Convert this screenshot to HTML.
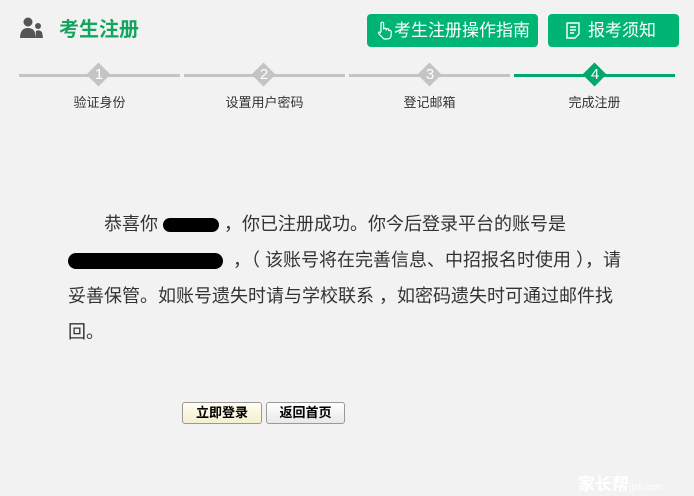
<!DOCTYPE html>
<html><head><meta charset="utf-8"><style>
body{margin:0;width:694px;height:496px;background:#f2f2f2;font-family:"Liberation Sans","Noto Sans CJK SC",sans-serif;position:relative;overflow:hidden}
.a{position:absolute}
.title{left:59px;top:16px;font-size:20px;font-weight:bold;color:#12a55f;line-height:28px}
.btn{background:#00b574;color:#fff;border-radius:4px;top:14px;height:33px;font-size:17px;line-height:33px}
.line{top:74px;height:3px;background:#c4c4c4}
.dia{width:17px;height:17px;transform:rotate(45deg);background:#c4c4c4;top:66px}
.num{top:64px;width:20px;text-align:center;color:#fff;font-size:15px;line-height:22px}
.lab{top:94px;font-size:13px;color:#333;width:161px;text-align:center;line-height:18px}
.txt{left:68px;top:206px;width:600px;font-size:18px;line-height:36px;color:#333;white-space:nowrap}
.blob{display:inline-block;background:#000;border-radius:8px;vertical-align:middle}
.b{top:402px;height:20px;border:1px solid #999;border-radius:3px;font-size:13px;font-weight:bold;line-height:20px;text-align:center;color:#000;background:linear-gradient(#fff,#e8e8e8)}
</style></head><body>
<svg class="a" style="left:19px;top:17px" width="26" height="22" viewBox="0 0 26 22">
<circle cx="9" cy="5" r="4.5" fill="#555"/><path d="M1 21 Q1 11 9 11 Q15 11 16 16 L16 21Z" fill="#555"/>
<circle cx="19" cy="9" r="3" fill="#555"/><path d="M16 21 L17 14 Q20 12 23 15 L24 21Z" fill="#555"/></svg>
<div class="a title">考生注册</div>
<div class="a btn" style="left:367px;width:171px"><svg style="position:absolute;left:9px;top:7px" width="16" height="19" viewBox="0 0 16 19"><path d="M5 11V2.5a1.3 1.3 0 0 1 2.6 0V8 M7.6 8.5a1.3 1.3 0 0 1 2.6 0V9.5 M10.2 9a1.3 1.3 0 0 1 2.6 0V10 M12.8 10a1.3 1.3 0 0 1 2.4 0.5V14Q15 18 11 18H8L3 13Q2 11.5 3.5 11L5 12" stroke="#fff" fill="none" stroke-width="1.2"/></svg><span style="margin-left:27px">考生注册操作指南</span></div>
<div class="a btn" style="left:548px;width:131px"><svg style="position:absolute;left:18px;top:8px" width="14" height="17" viewBox="0 0 14 17"><path d="M1 1H13V12L9 16H1Z M4 5H10 M4 8H10 M4 11H8" stroke="#fff" fill="none" stroke-width="1.4"/></svg><span style="margin-left:40px">报考须知</span></div>
<div class="a line" style="left:19px;width:161px"></div>
<div class="a line" style="left:184px;width:161px"></div>
<div class="a line" style="left:349px;width:161px"></div>
<div class="a line" style="left:514px;width:161px;background:#00a86b"></div>
<div class="a dia" style="left:90px"></div><div class="a dia" style="left:255px"></div><div class="a dia" style="left:421px"></div><div class="a dia" style="left:586px;background:#00a86b"></div>
<div class="a num" style="left:89px">1</div><div class="a num" style="left:254px">2</div><div class="a num" style="left:420px">3</div><div class="a num" style="left:585px">4</div>
<div class="a lab" style="left:19px">验证身份</div><div class="a lab" style="left:184px">设置用户密码</div><div class="a lab" style="left:349px">登记邮箱</div><div class="a lab" style="left:514px">完成注册</div>
<div class="a txt">　　恭喜你 <span class="blob" style="width:56px;height:14px"></span> ，你已注册成功。你今后登录平台的账号是<br><span class="blob" style="width:155px;height:16px"></span> &nbsp;，（ 该账号将在完善信息、中招报名时使用 ），请<br>妥善保管。如账号遗失时请与学校联系 ，如密码遗失时可通过邮件找<br>回。</div>
<div class="a b" style="left:182px;width:78px;background:linear-gradient(#fffef0,#f4efd0)">立即登录</div>
<div class="a b" style="left:266px;width:77px">返回首页</div>
<div class="a" style="left:578px;top:470px;color:#fff;font-size:17px;font-weight:bold">家长帮<span style="font-size:9px;font-weight:normal">|jzb.com</span></div>
</body></html>
